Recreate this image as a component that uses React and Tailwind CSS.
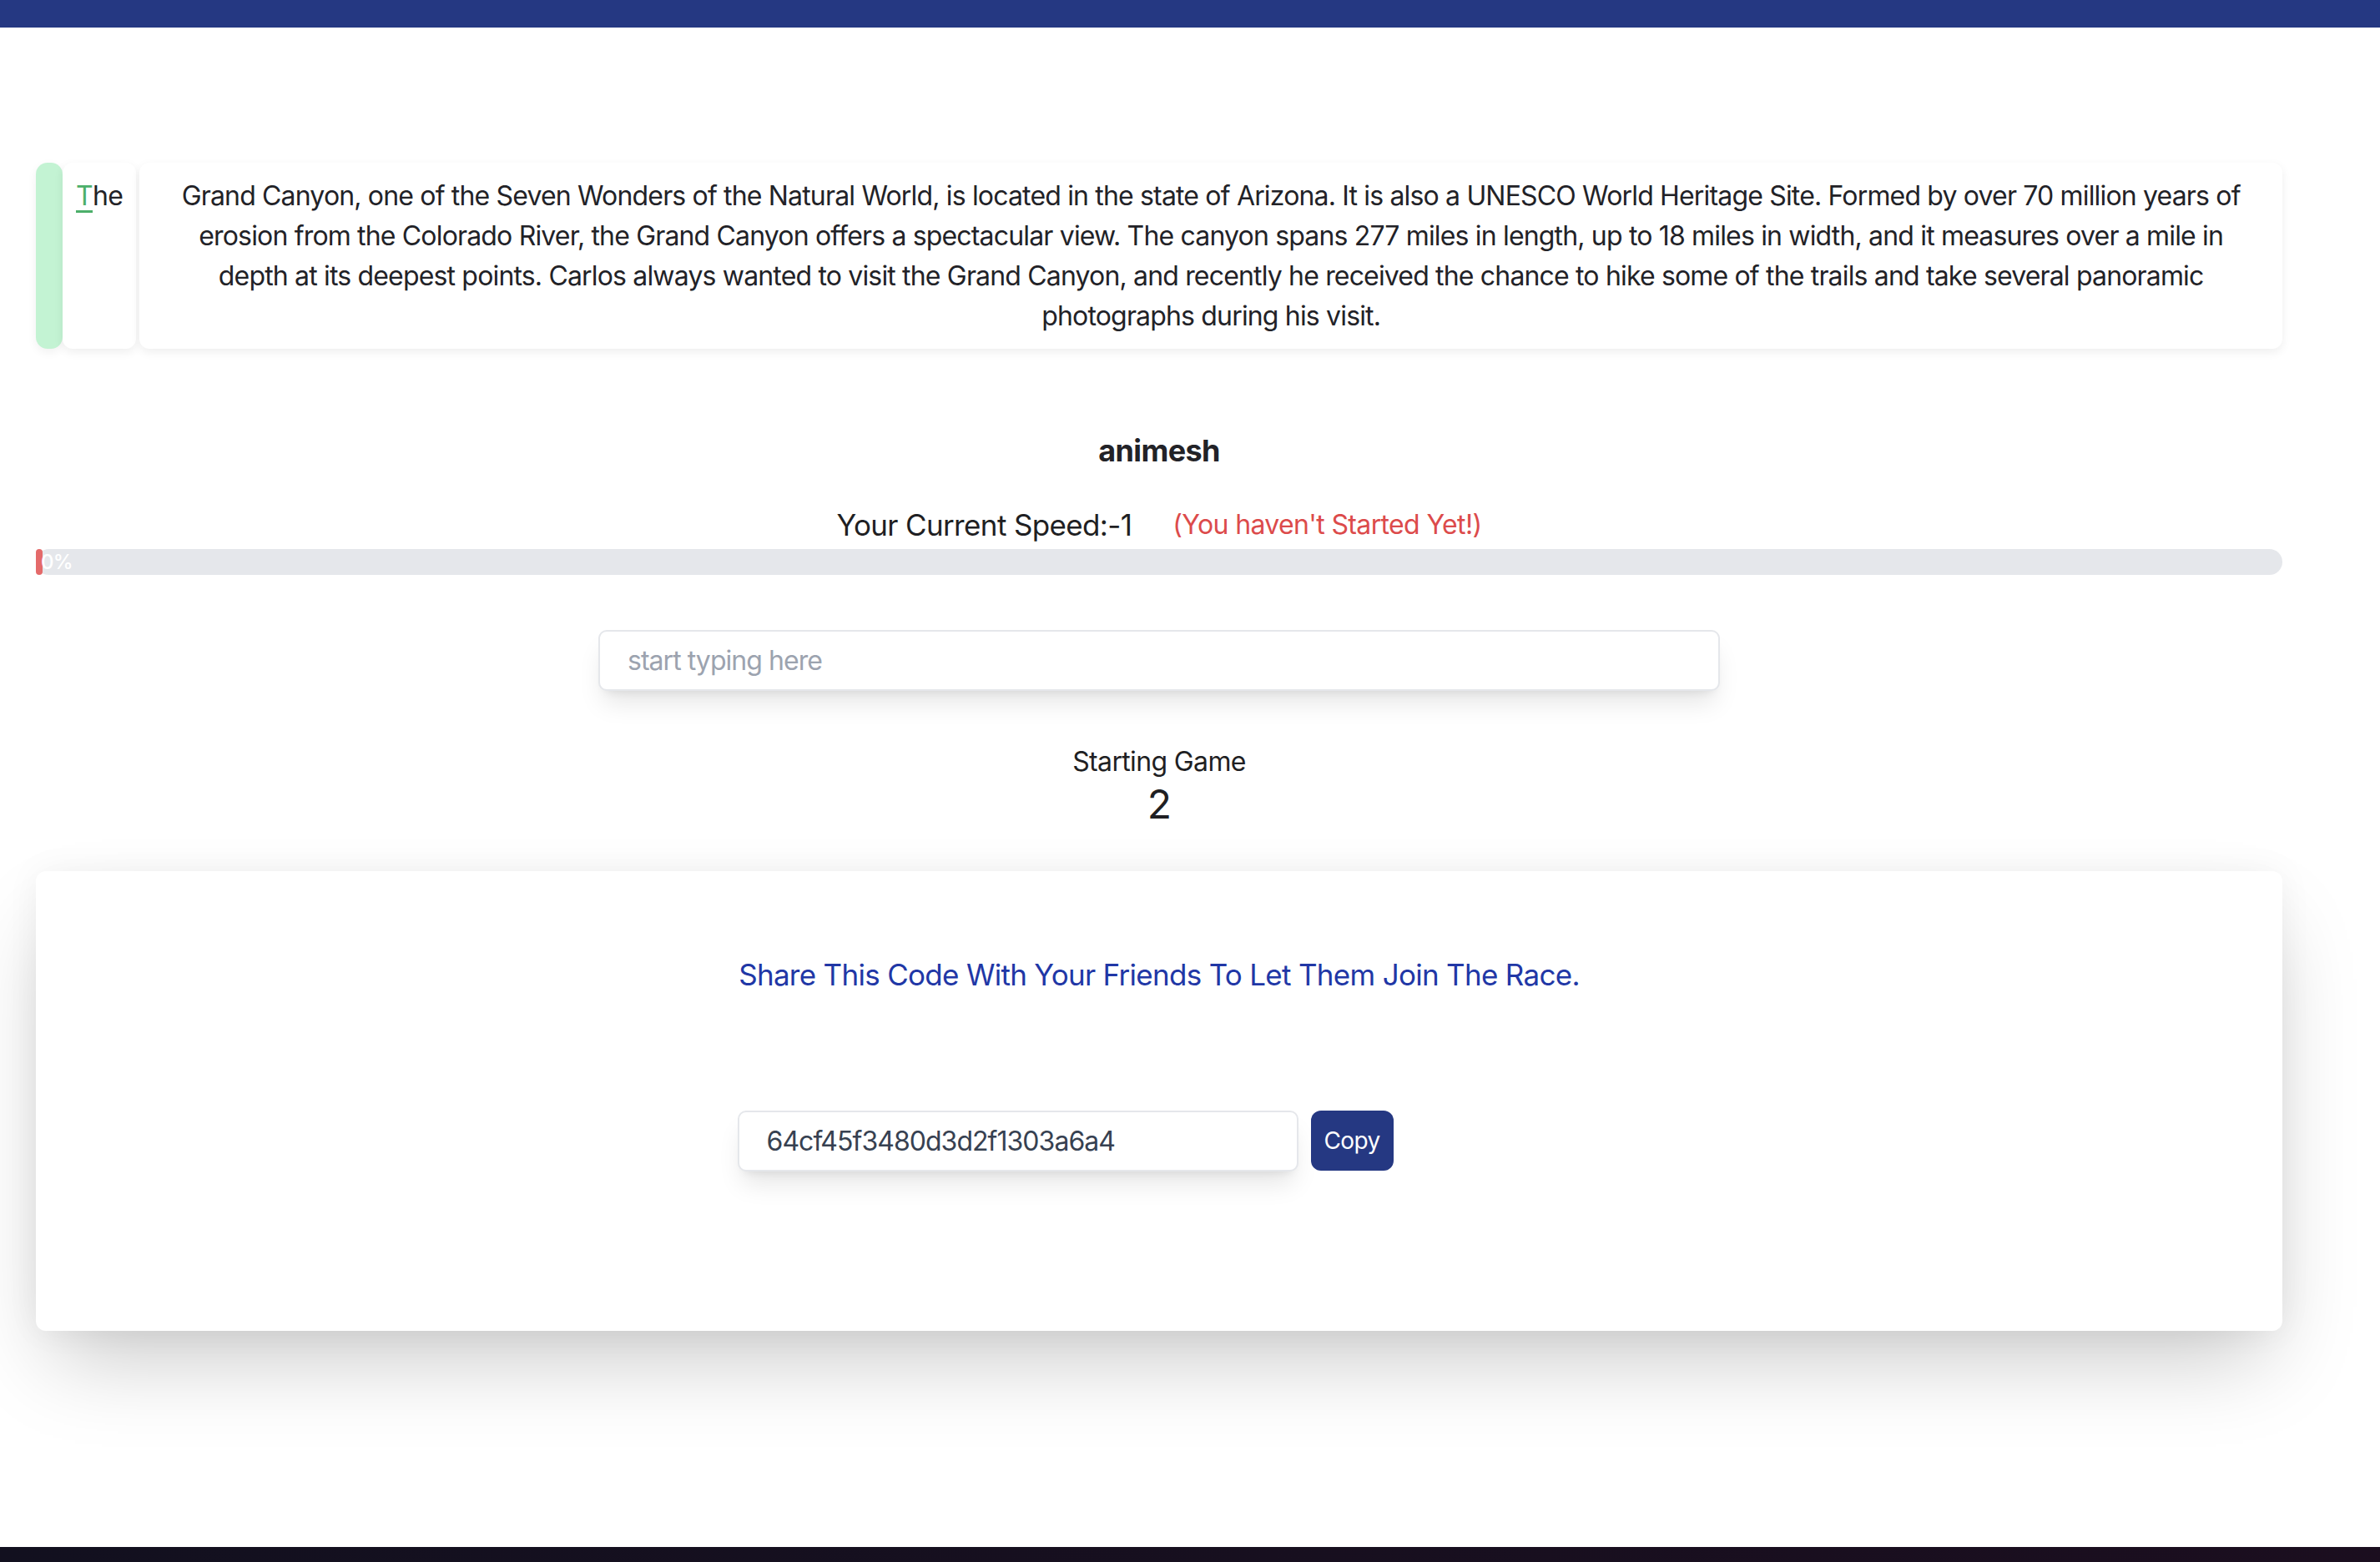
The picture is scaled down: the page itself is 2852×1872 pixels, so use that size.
import React from "react";

const passageLines = [
  "Grand Canyon, one of the Seven Wonders of the Natural World, is located in the state of Arizona. It is also a UNESCO World Heritage Site. Formed by over 70 million years of",
  "erosion from the Colorado River, the Grand Canyon offers a spectacular view. The canyon spans 277 miles in length, up to 18 miles in width, and it measures over a mile in",
  "depth at its deepest points. Carlos always wanted to visit the Grand Canyon, and recently he received the chance to hike some of the trails and take several panoramic",
  "photographs during his visit.",
];

function TypingText() {
  return (
    <div className="flex items-stretch mt-[162px] h-[223px]">
      <div className="w-[32px] bg-[#c3f3d3] rounded-[14px] shadow-[0_4px_12px_rgba(0,0,0,0.06)]" />
      <div className="bg-white rounded-[12px] px-4 py-4 shadow-[0_4px_12px_rgba(0,0,0,0.07)] text-[32px] leading-[48px] tracking-[-0.02em] text-[#222227]">
        <span className="underline decoration-[3px] underline-offset-[6px] text-[#4caf6a] decoration-[#4caf6a]">
          T
        </span>
        he
      </div>
      <div className="flex-1 ml-[4px] bg-white rounded-[12px] px-[20px] py-4 shadow-[0_4px_12px_rgba(0,0,0,0.07)] text-[32px] leading-[48px] tracking-[-0.026em] text-center text-[#222227]">
        {passageLines.map((line, i) => (
          <div key={i} className="whitespace-nowrap">
            {line}
          </div>
        ))}
      </div>
    </div>
  );
}

function Progress() {
  return (
    <div className="mt-[5px] h-[31px] bg-[#e5e7eb] rounded-full relative">
      <div className="h-full w-[8px] bg-[#e46a6a] rounded-full" />
      <span className="absolute left-[6px] top-0 h-full flex items-center text-[24px] font-medium text-white leading-none">
        0%
      </span>
    </div>
  );
}

function ShareCard() {
  return (
    <div className="mt-[52px] h-[551px] bg-white rounded-[12px] pt-[100px] shadow-[0_50px_100px_-20px_rgba(0,0,0,0.22),0_0_40px_rgba(0,0,0,0.05)]">
      <p className="text-center text-[35px] leading-[48px] tracking-[-0.02em] text-[#2137a6]">
        Share This Code With Your Friends To Let Them Join The Race.
      </p>
      <div className="mt-[139px] w-[1011px] mx-auto flex gap-[15px]">
        <input
          readOnly
          value="64cf45f3480d3d2f1303a6a4"
          className="w-[672px] h-[73px] px-[33px] bg-white border-2 border-[#e5e7eb] rounded-[10px] text-[32px] tracking-[-0.03em] text-[#374151] shadow-[0_20px_30px_-6px_rgba(0,0,0,0.1),0_8px_12px_-8px_rgba(0,0,0,0.1)] outline-none"
        />
        <button className="w-[99px] h-[72px] bg-[#253882] text-white text-[28px] rounded-[12px]">
          Copy
        </button>
      </div>
    </div>
  );
}

export default function App() {
  return (
    <div className="min-h-[1872px] flex flex-col bg-white font-['Inter',sans-serif] tracking-[-0.04em]">
      <div className="h-[33px] bg-[#253882]" />
      <div className="ml-[43px] w-[2692px]">
        <TypingText />
        <h2 className="mt-[98px] text-center text-[36px] leading-[48px] font-bold text-[#222227]">
          animesh
        </h2>
        <div className="mt-[41px] flex justify-center items-center gap-[49px] h-[48px]">
          <span className="text-[35px] text-[#1f1f23]">Your Current Speed:-1</span>
          <span className="text-[32px] text-[#dc4b4b]">(You haven't Started Yet!)</span>
        </div>
        <Progress />
        <div className="mt-[66px] flex justify-center">
          <input
            placeholder="start typing here"
            className="w-[1344px] h-[73px] px-[33px] bg-white border-2 border-[#e5e7eb] rounded-[10px] text-[32px] tracking-[-0.03em] placeholder:text-[#9ca3af] shadow-[0_20px_30px_-6px_rgba(0,0,0,0.1),0_8px_12px_-8px_rgba(0,0,0,0.1)] outline-none"
          />
        </div>
        <div className="mt-[63px] text-center text-[32px] leading-[44px] text-[#1f1f23]">
          Starting Game
        </div>
        <div className="mt-[1px] text-center text-[48px] leading-[56px] text-[#1f1f23]">2</div>
        <ShareCard />
      </div>
      <div className="flex-1" />
      <div className="h-[18px] bg-gradient-to-r from-[#12101f] to-[#1b0e1f]" />
    </div>
  );
}
